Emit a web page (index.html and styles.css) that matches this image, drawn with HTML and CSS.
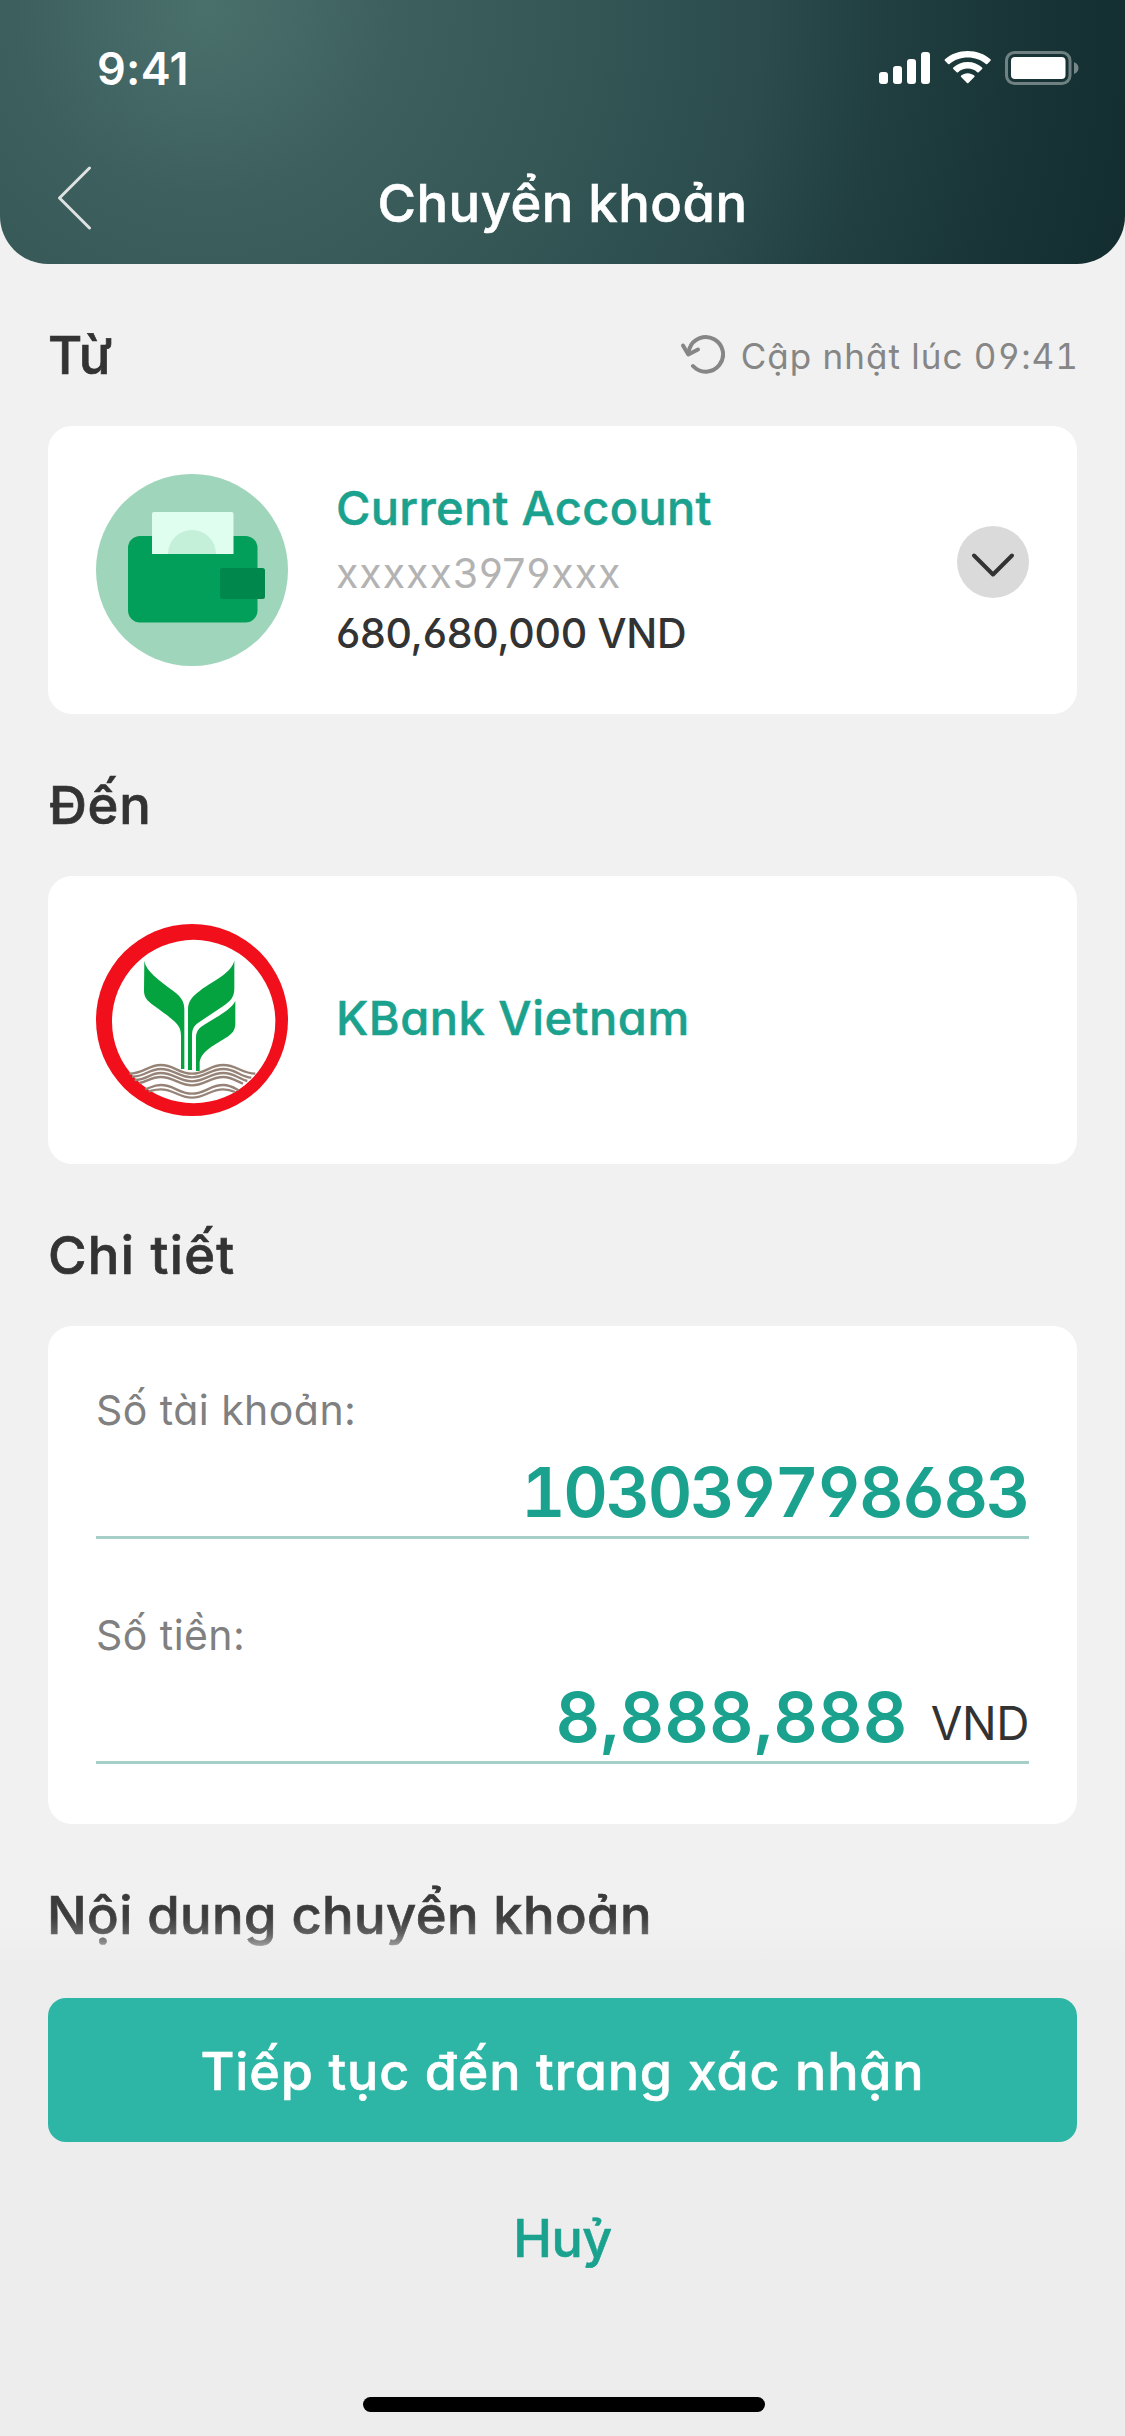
FILE: index.html
```html
<!DOCTYPE html>
<html lang="vi">
<head>
<meta charset="utf-8">
<title>Chuyển khoản</title>
<link rel="stylesheet" href="styles.css">
</head>
<body>
<div class="screen">
  <header class="header">
    <div class="status">
      <span class="time">9:41</span>
      <svg class="status-icons" viewBox="0 0 204 40" width="204" height="40">
        <g fill="#fff">
          <rect x="4" y="24" width="9" height="12" rx="3"/>
          <rect x="18" y="18" width="9" height="18" rx="3"/>
          <rect x="32" y="11" width="9" height="25" rx="3"/>
          <rect x="46" y="4" width="9" height="32" rx="3"/>
          <path d="M92.700 9C101.500 9 109.500 12 115.500 17.300Q116.200 18 115.500 18.800L112.300 22Q111.600 22.600 110.900 22C106 17.800 99.700 15.500 92.700 15.500C85.700 15.500 79.400 17.800 74.500 22Q73.800 22.600 73.100 22L69.900 18.800Q69.200 18 69.900 17.300C75.900 12 83.900 9 92.700 9Z" transform="translate(0 -6)"/>
          <path d="M92.700 14C98.300 14 103.300 16 107.100 19.500Q107.800 20.200 107.100 20.900L103.700 24.200Q103 24.800 102.300 24.200C99.700 21.900 96.400 20.600 92.700 20.600C89 20.600 85.700 21.900 83.100 24.200Q82.400 24.800 81.700 24.200L78.300 20.900Q77.600 20.200 78.300 19.500C82.100 16 87.100 14 92.700 14Z"/>
          <path d="M92.700 25.200C95.300 25.200 97.600 26.100 99.300 27.600Q100 28.300 99.300 29L93.400 35Q92.700 35.700 92 35L86.100 29Q85.400 28.300 86.100 27.600C87.800 26.100 90.100 25.200 92.700 25.200Z"/>
          <rect x="136" y="9" width="54.500" height="22" rx="4"/>
        </g>
        <rect x="131.500" y="4.500" width="63.500" height="31" rx="8" fill="none" stroke="#fff" stroke-opacity=".38" stroke-width="3"/>
        <path d="M199 14Q203.500 16 203.500 20T199 26Z" fill="#fff" fill-opacity=".42"/>
      </svg>
    </div>
    <div class="nav">
      <svg class="back" viewBox="0 0 36 64" width="36" height="64"><path d="M32.500 2L2.500 32L32.500 62" fill="none" stroke="#dfe2e2" stroke-width="3" stroke-linecap="round" stroke-linejoin="round"/></svg>
      <h1 class="title">Chuyển khoản</h1>
    </div>
  </header>

  <main class="content">
    <div class="section-head">
      <h2 class="from">Từ</h2>
      <div class="refresh">
        <svg viewBox="0 0 46 40" width="46" height="40"><g fill="none" stroke="#868686" stroke-width="4" stroke-linecap="round" stroke-linejoin="round"><path d="M14 32A17.300 17.300 0 1 0 10.500 14.500L9 19.500"/><path d="M4 11.500L9.300 20.500L19 15.500"/></g></svg>
        <span>Cập nhật lúc 09:41</span>
      </div>
    </div>
    <section class="card account">
      <svg class="avatar" viewBox="0 0 192 192">
        <circle cx="96" cy="96" r="96" fill="#9fd5bb"/>
        <rect x="32" y="62" width="129.500" height="86.500" rx="12" fill="#029f5b"/>
        <path d="M58 38h77.500a2 2 0 0 1 2 2v40H56V40a2 2 0 0 1 2-2Z" fill="#e0fef0"/>
        <path d="M72 80a24 24 0 0 1 48 0Z" fill="#c4f0da"/>
        <rect x="124" y="94" width="45" height="31" rx="2.500" fill="#00874c"/>
      </svg>
      <div class="account-text">
        <div class="account-name">Current Account</div>
        <div class="account-number">xxxxx3979xxx</div>
        <div class="balance">680,680,000 VND</div>
      </div>
      <svg class="expand" viewBox="0 0 72 72" width="72" height="72"><circle cx="36" cy="36" r="36" fill="#dadada"/><path d="M17 29.500L36 48.500L55 29.500" fill="none" stroke="#333" stroke-width="4" stroke-linecap="round" stroke-linejoin="round"/></svg>
    </section>

    <div class="section-head"><h2 class="to">Đến</h2></div>
    <section class="card account">
      <svg class="avatar" viewBox="18 12 576 576">
        <circle cx="306" cy="300" r="288" fill="#f00f1a"/>
        <circle cx="311" cy="304.500" r="245" fill="#fff"/>
        <g fill="#04a33f">
          <path d="M163 122C167 152 205 180 250 213C272 230 283 243 283 268V447H273V350C273 315 262 308 190 256C170 241 162 230 162 212Z"/>
          <path d="M433 121V205C433 230 424 242 400 258L325 308C310 319 306 328 306 350V450H294V268C294 243 308 228 330 212C375 180 427 157 433 121Z"/>
          <path d="M436 243V310C436 330 428 342 405 355C370 378 329 396 329 432V453H318V355C318 333 326 325 345 313C385 288 424 268 436 243Z"/>
        </g>
        <g fill="none" stroke="#968377" stroke-width="7">
          <path d="M118 461C160 461 175 435 212 435C253 435 265 461 306 461C347 461 359 435 400 435C440 435 455 461 496 461"/>
          <path d="M126 470C164 470 177 447 212 447C253 447 265 472 306 472C347 472 359 447 400 447C438 447 450 470 484 473"/>
          <path d="M134 480C170 480 180 459 212 459C253 459 265 484 306 484C347 484 359 459 400 459C432 459 446 477 472 483"/>
          <path d="M148 489C172 485 184 471 212 471C253 471 265 496 306 496C347 496 359 471 400 471C425 471 440 484 459 491"/>
          <path d="M166 508C184 502 192 495 212 495C253 495 265 521 306 521C347 521 359 495 400 495C420 495 430 502 446 511"/>
          <path d="M176 514C188 511 196 508 212 508C253 508 265 533 306 533C347 533 359 508 400 508C415 508 424 511 436 516"/>
        </g>
      </svg>
      <div class="bank-name">KBank Vietnam</div>
    </section>

    <div class="section-head"><h2 class="detail">Chi tiết</h2></div>
    <section class="card details">
      <div class="field">
        <div class="label">Số tài khoản:</div>
        <div class="value"><span class="number">103039798683</span></div>
      </div>
      <div class="field">
        <div class="label">Số tiền:</div>
        <div class="value"><span class="amount">8,888,888</span><span class="unit">VND</span></div>
      </div>
    </section>

    <div class="section-head"><h2 class="note">Nội dung chuyển khoản</h2></div>
  </main>

  <footer class="footer">
    <button class="primary">Tiếp tục đến trang xác nhận</button>
    <button class="cancel">Huỷ</button>
    <div class="home"></div>
  </footer>
</div>
</body>
</html>
```
FILE: styles.css
```css
* { box-sizing: border-box; margin: 0; padding: 0; }
body { background: #f1f1f1; }
svg { display: block; flex: none; }
.screen {
  width: 1125px; height: 2436px; overflow: hidden;
  display: flex; flex-direction: column;
  background: #f1f1f1; color: #333;
  font-family: Inter, "Noto Sans", sans-serif;
  font-feature-settings: "cv11" 1, "cv03" 1, "cv04" 1;
  white-space: nowrap;
}

.header {
  height: 264px; flex: none; color: #fff;
  border-radius: 0 0 48px 48px;
  background: radial-gradient(circle at 205px 8px, #4a706c 0, #3d605e 190px, #335554 400px, #2b4b4c 560px, #213f40 680px, #183436 820px, #132d2f 960px);
}
.status { height: 136px; padding: 0 46px 0 97px; display: flex; align-items: center; justify-content: space-between; }
.time { font-size: 45px; font-weight: 600; letter-spacing: .3px; font-feature-settings: normal; }
.nav { height: 128px; padding: 5px 57px 0; display: grid; grid-template-columns: 36px 1fr 36px; align-items: center; }
.back { margin-top: -9px; }
.title { text-align: center; font-size: 52.5px; font-weight: 500; letter-spacing: .5px; -webkit-text-stroke: .6px; }

.content { flex: none; padding: 0 48px; }
.section-head { height: 162px; padding-top: 20px; display: flex; align-items: center; justify-content: space-between; }
h2 { font-size: 52.5px; font-weight: 500; letter-spacing: .4px; -webkit-text-stroke: .7px; }
.to { letter-spacing: .7px; margin-left: 1px; }
.detail { letter-spacing: 1.3px; }
.note { margin-left: -1px; }
.refresh { display: flex; align-items: center; gap: 16px; margin: 1px -2px 0 0; font-size: 35px; letter-spacing: 1px; color: #868686; font-feature-settings: "cv11" 1, "tnum" 1, "cv03" 1, "cv04" 1; }
.refresh svg { margin-top: -4px; }

.card { background: #fff; border-radius: 24px; }
.account { height: 288px; padding: 48px; display: flex; align-items: center; }
.avatar { width: 192px; height: 192px; margin-right: 48px; }
.account-text { flex: 1; align-self: flex-start; }
.account-name, .bank-name { color: #1ba28f; font-size: 47px; font-weight: 500; -webkit-text-stroke: .5px; }
.account-name { line-height: 68px; letter-spacing: .3px; }
.account-number { line-height: 62px; font-size: 41px; letter-spacing: .98px; color: #b3b3b3; }
.balance { line-height: 58px; font-size: 41px; font-weight: 500; letter-spacing: -.3px; }
.bank-name { letter-spacing: .5px; margin-bottom: 6px; }
.expand { align-self: flex-start; margin-top: 52px; }

.details { height: 498px; padding: 48px; display: flex; flex-direction: column; gap: 60px; }
.label { line-height: 72px; font-size: 41px; letter-spacing: .45px; color: #808080; }
.value { height: 93px; padding-top: 3px; border-bottom: 3px solid #a6cfc8; display: flex; align-items: center; justify-content: flex-end; }
.number, .amount { color: #1ba28f; font-size: 69px; font-weight: 600; line-height: 87px; }
.number { letter-spacing: -2.4px; margin-right: 1px; font-feature-settings: "tnum" 1, "cv03" 1, "cv04" 1; }
.amount { letter-spacing: .6px; }
.unit { margin: 11px 0 0 23px; font-size: 46px; letter-spacing: -.45px; }

/* The action bar fades in over the end of the scrolled content. */
.footer {
  position: relative; margin-top: -126px; padding: 138px 48px 0; height: 576px;
  display: flex; flex-direction: column; align-items: center; flex: none;
  background: linear-gradient(rgba(237,237,237,0) 0, rgba(237,237,237,.06) 58px, rgba(237,237,237,.25) 74px, rgba(237,237,237,.62) 88px, #ededed 106px);
}
button { border: 0; background: none; font: inherit; font-size: 52px; font-weight: 500; letter-spacing: .87px; font-feature-settings: inherit; -webkit-text-stroke: .6px; }
.primary { width: 100%; height: 144px; padding-top: 3px; border-radius: 18px; background: #2db6a5; color: #fff; }
.cancel { height: 192px; padding-left: 0; color: #1ba28f; letter-spacing: -.5px; }
.home { width: 402px; height: 15px; margin: 63px 0 0 3px; border-radius: 8px; background: #000; }
```
